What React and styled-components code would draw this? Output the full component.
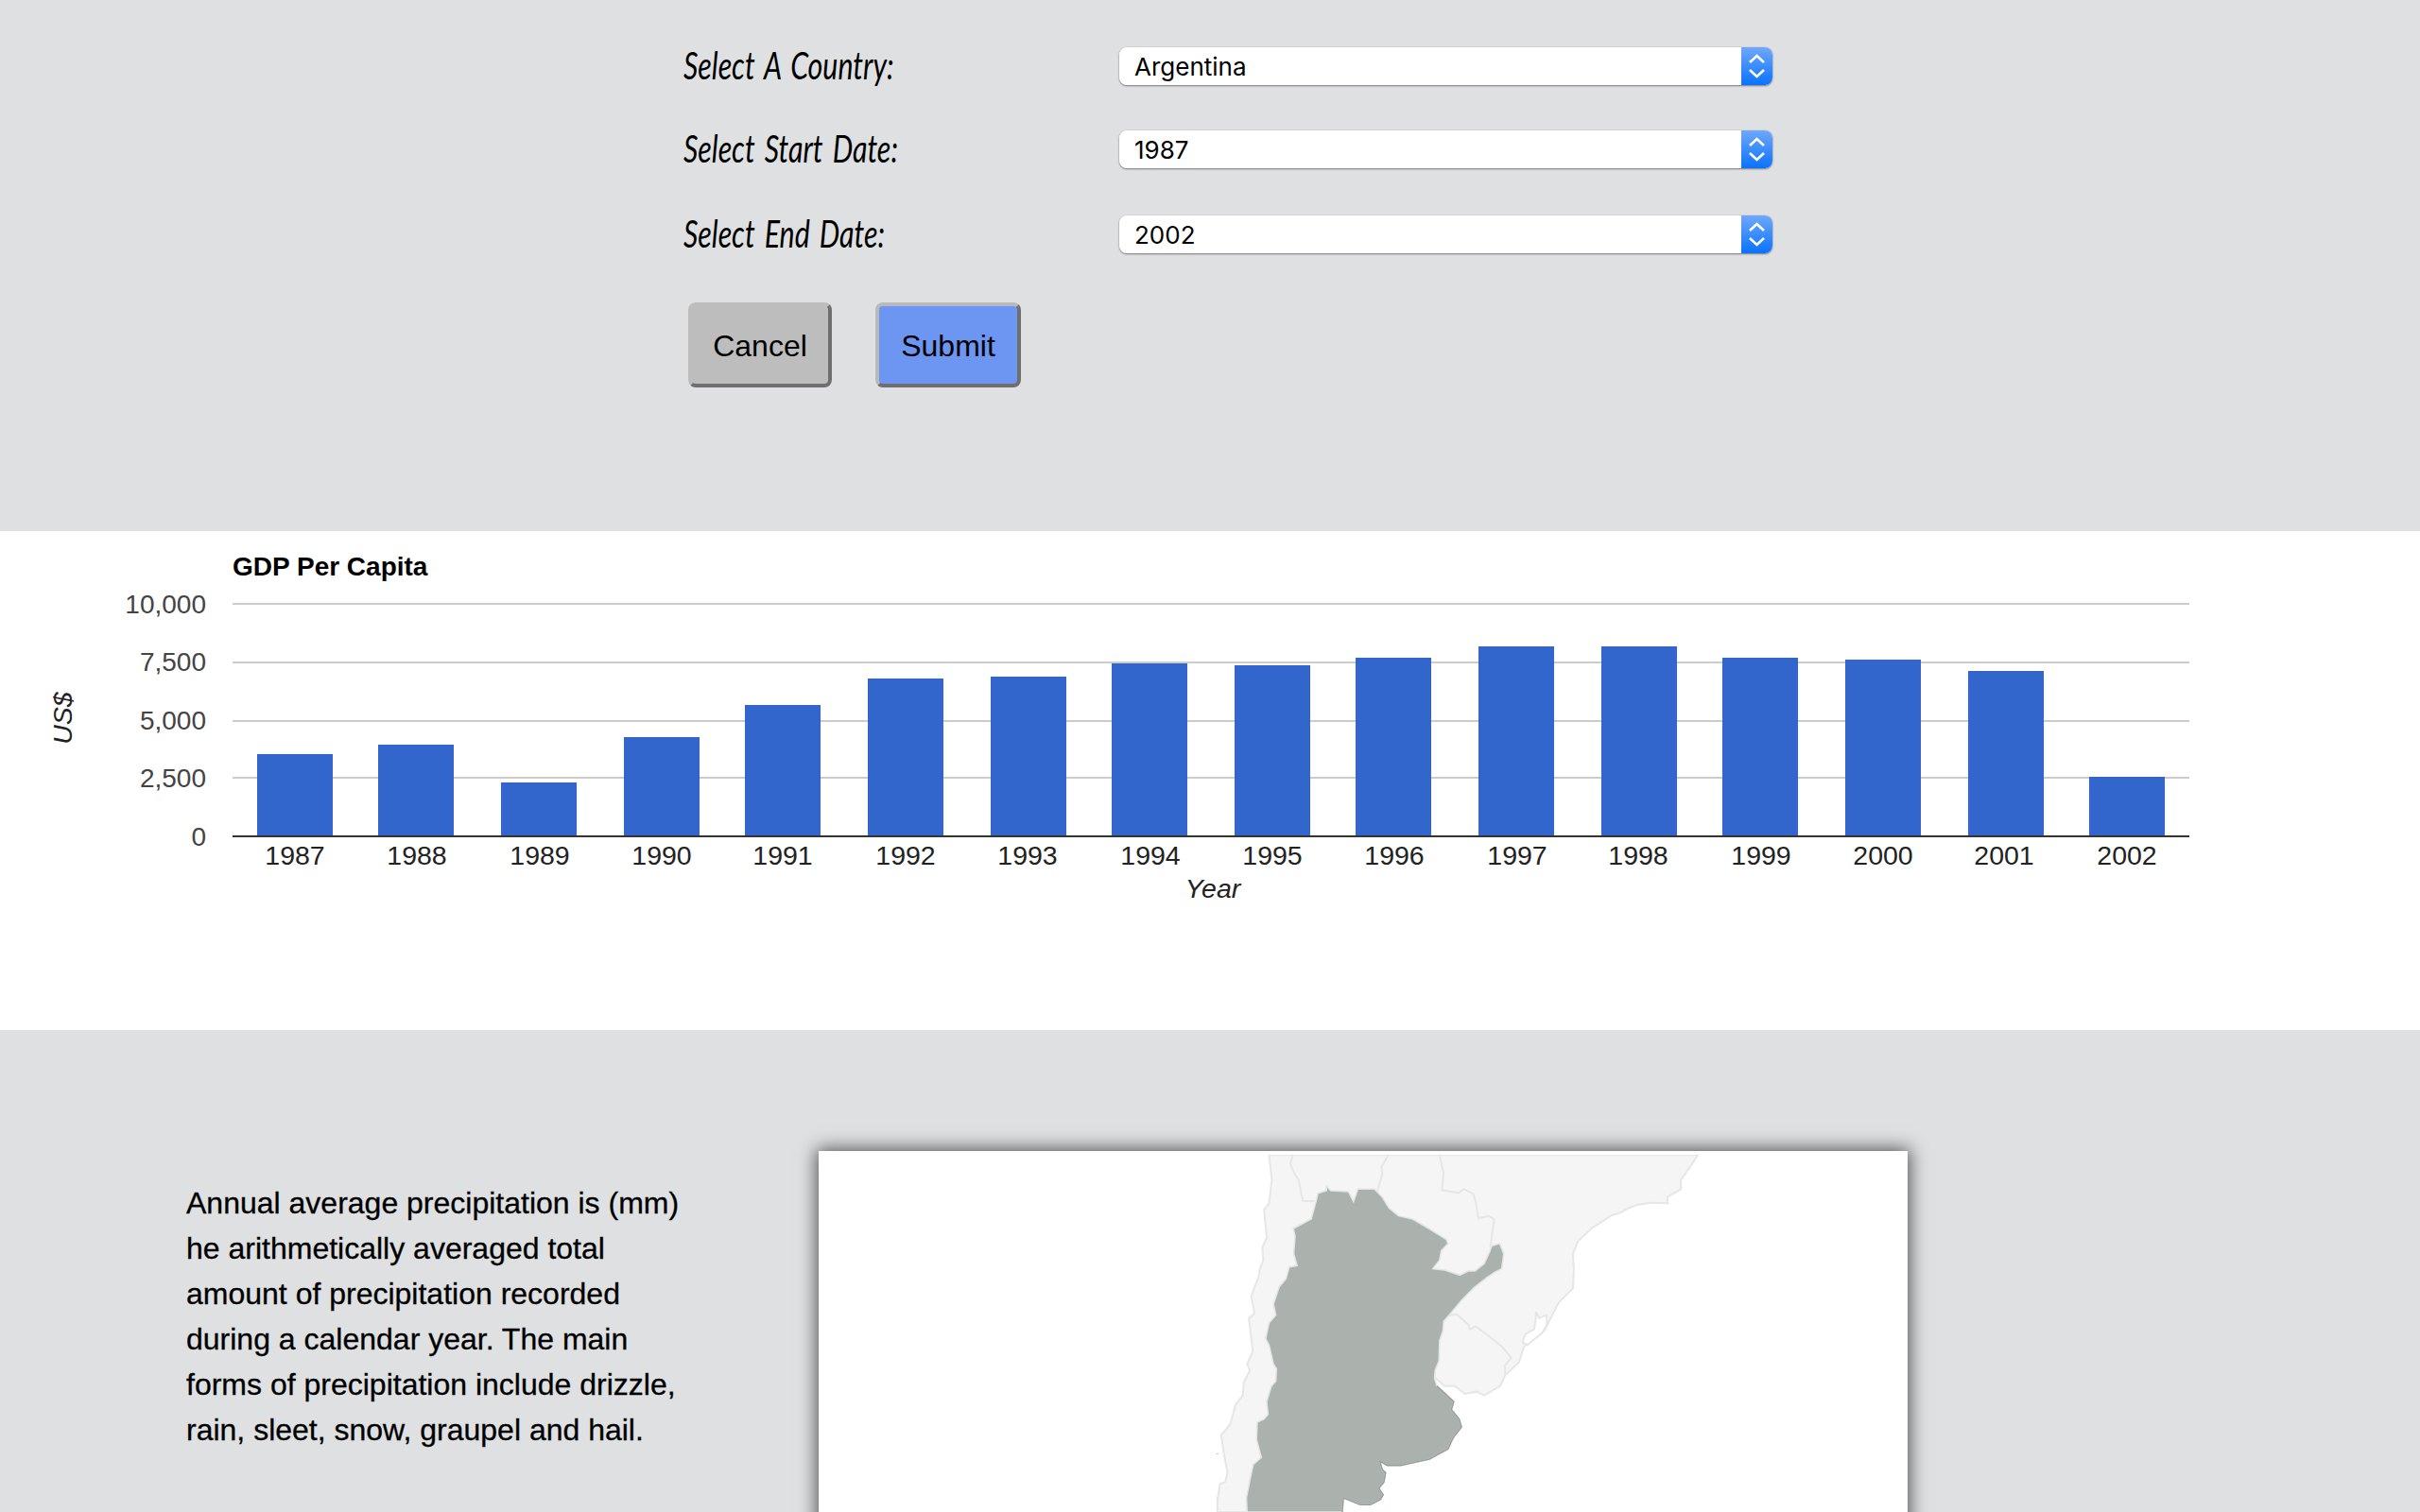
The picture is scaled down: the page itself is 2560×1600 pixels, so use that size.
import styled, { createGlobalStyle } from "styled-components";

const Reset = createGlobalStyle`
  html, body {
    margin: 0;
    height: 1600px;
    overflow: hidden;
    background: #dee0e2;
    font-family: "Liberation Sans", Arial, sans-serif;
  }
`;

const bars = [
  { year: 1987, x: 272, top: 798, label: 312 },
  { year: 1988, x: 400, top: 788, label: 441 },
  { year: 1989, x: 530, top: 828, label: 571 },
  { year: 1990, x: 660, top: 780, label: 700 },
  { year: 1991, x: 788, top: 746, label: 828 },
  { year: 1992, x: 918, top: 718, label: 958 },
  { year: 1993, x: 1048, top: 716, label: 1087 },
  { year: 1994, x: 1176, top: 702, label: 1217 },
  { year: 1995, x: 1306, top: 704, label: 1346 },
  { year: 1996, x: 1434, top: 696, label: 1475 },
  { year: 1997, x: 1564, top: 684, label: 1605 },
  { year: 1998, x: 1694, top: 684, label: 1733 },
  { year: 1999, x: 1822, top: 696, label: 1863 },
  { year: 2000, x: 1952, top: 698, label: 1992 },
  { year: 2001, x: 2082, top: 710, label: 2120 },
  { year: 2002, x: 2210, top: 822, label: 2250 },
];

const ticks = [
  { text: "10,000", line: 639, base: 649 },
  { text: "7,500", line: 701, base: 710 },
  { text: "5,000", line: 763, base: 772 },
  { text: "2,500", line: 823, base: 833 },
];

const selects = [
  { label: "Select A Country:", value: "Argentina", gap: 48 },
  { label: "Select Start Date:", value: "1987", gap: 50 },
  { label: "Select End Date:", value: "2002", gap: 52 },
];

const land =
  "175,36 183,115 175,190 160,210 168,300 155,330 158,370 147,400 145,420 122,485 132,540 115,555 127,660 110,700 118,720 100,760 97,800 75,830 68,860 60,890 42,915 33,925 42,990 52,1045 45,1075 30,1080 22,1130 22,1170 200,1170 668,745 695,770 725,770 755,795 790,788 812,800 860,770 875,735 915,695 930,645 990,595 1033,505 1075,460 1078,400 1075,350 1090,310 1130,270 1190,228 1215,220 1240,205 1265,195 1305,188 1355,190 1355,170 1395,145 1395,115 1425,70 1445,36";

const borders = [
  "245,36 238,65 250,95 262,115 275,183 310,183",
  "528,36 508,75 510,100 493,160",
  "680,36 692,95 687,148 735,157 752,145 780,160 787,185 795,238 825,230 842,240 830,330",
  "705,547 730,542 765,575 770,590 787,580 830,615 865,645 892,680 873,705 875,735",
];

const lagoon = "965,535 975,555 997,545 998,575 985,600 940,640 925,630 935,605 960,590 965,560";

const argentina =
  "345,135 358,150 410,153 425,185 438,145 487,145 510,170 530,205 558,230 600,240 640,265 700,305 705,318 685,340 680,370 660,398 695,402 740,418 765,405 785,405 812,382 828,345 835,325 858,318 870,350 864,398 845,408 822,424 782,458 745,498 708,545 692,565 690,595 680,625 678,690 667,720 665,745 672,770 722,820 715,845 738,875 745,900 720,935 705,970 650,1002 565,1022 525,1022 503,1008 510,1035 520,1045 515,1075 500,1095 513,1115 505,1130 475,1147 445,1147 395,1125 392,1170 110,1170 108,1125 120,1060 128,1020 152,997 138,940 140,885 160,875 172,860 168,820 182,770 195,755 197,715 188,700 175,640 165,620 175,570 195,545 188,510 205,455 225,430 235,392 258,388 248,350 252,295 247,270 300,240 315,180 320,158 345,150";

const coast =
  "672,770 722,820 715,845 738,875 745,900 720,935 705,970 650,1002 565,1022 525,1022 503,1008 510,1035 520,1045 515,1075 500,1095 513,1115 505,1130 475,1147 445,1147 395,1125 392,1170";

export default function App() {
  return (
    <Page>
      <Reset />
      <FormSection>
        {selects.map((row) => (
          <Row key={row.label} $gap={row.gap}>
            <LabelCell>
              <Label>{row.label}</Label>
            </LabelCell>
            <SelectBox>
              <NativeSelect defaultValue={row.value}>
                <option>{row.value}</option>
              </NativeSelect>
              <Stepper viewBox="0 0 33 40">
                <path d="M9 16 L16.5 9 L24 16 M9 24 L16.5 31 L24 24" />
              </Stepper>
            </SelectBox>
          </Row>
        ))}
        <Buttons>
          <Button $bg="#bdbdbd" $light="#bdbdbd" $width={152}>Cancel</Button>
          <Button $bg="#6d95f2" $light="#b9b9b9" $width={154}>Submit</Button>
        </Buttons>
      </FormSection>

      <ChartSection>
        <svg width="2560" height="528" viewBox="0 562 2560 528">
          <ChartTitle x="246" y="609">GDP Per Capita</ChartTitle>
          {ticks.map((t) => (
            <g key={t.text}>
              <rect x="246" y={t.line - 1} width="2070" height="2" fill="#cccccc" />
              <TickText x="218" y={t.base}>{t.text}</TickText>
            </g>
          ))}
          <TickText x="218" y="895">0</TickText>
          {bars.map((b) => (
            <g key={b.year}>
              <rect x={b.x} y={b.top} width="80" height={884 - b.top} fill="#3366cc" />
              <YearText x={b.label} y="915">{b.year}</YearText>
            </g>
          ))}
          <rect x="246" y="884" width="2070" height="2" fill="#333333" />
          <AxisName x="1283" y="950">Year</AxisName>
          <AxisName x="76" y="760" transform="rotate(-90 76 760)">US$</AxisName>
        </svg>
      </ChartSection>

      <MapSection>
        <Blurb>
          Annual average precipitation is (mm) he arithmetically averaged total amount of
          precipitation recorded during a calendar year. The main forms of precipitation
          include drizzle, rain, sleet, snow, graupel and hail.
        </Blurb>
        <MapCard>
          <svg width="1152" height="378" viewBox="-1159.2 36 3225.6 1134" preserveAspectRatio="none">
            <Land points={land} />
            {borders.map((b) => (
              <Border key={b} points={b} />
            ))}
            <Lagoon points={lagoon} />
            <Country points={argentina} />
            <Coast points={coast} />
            <ellipse cx="22" cy="985" rx="4" ry="2" fill="#c4c4c4" />
          </svg>
        </MapCard>
      </MapSection>
    </Page>
  );
}

const Page = styled.div`
  height: 1600px;
  overflow: hidden;
`;

const FormSection = styled.section`
  height: 562px;
  box-sizing: border-box;
  padding: 50px 0 0 723px;
  background: #dee0e2;
`;

const Row = styled.div`
  display: flex;
  align-items: center;
  height: 40px;
  margin-bottom: ${(p) => p.$gap}px;
`;

const LabelCell = styled.div`
  width: 461px;
  flex: none;
  margin-top: -4px;
`;

const Label = styled.label`
  display: inline-block;
  font-family: Lato, "Liberation Sans", sans-serif;
  font-style: italic;
  font-size: 41px;
  word-spacing: 4px;
  white-space: nowrap;
  color: #000;
  transform: scaleX(0.74);
  transform-origin: left center;
`;

const SelectBox = styled.div`
  position: relative;
  width: 691px;
  height: 40px;
  border-radius: 8px;
  overflow: hidden;
  box-shadow: 0 1px 2px rgba(0, 0, 0, 0.45), 0 0 1px rgba(0, 0, 0, 0.35);
`;

const NativeSelect = styled.select`
  appearance: none;
  display: block;
  width: 100%;
  height: 100%;
  border: 0;
  padding: 0 0 0 16px;
  background: #fff;
  font-family: Inter, sans-serif;
  font-size: 26px;
  color: #000;
`;

const Stepper = styled.svg`
  position: absolute;
  top: 0;
  right: 0;
  width: 33px;
  height: 40px;
  background: linear-gradient(#6fa8fb, #0a72ff);
  pointer-events: none;

  path {
    fill: none;
    stroke: #fff;
    stroke-width: 2.6;
  }
`;

const Buttons = styled.div`
  display: flex;
  gap: 46px;
  padding-left: 5px;
`;

const Button = styled.button`
  width: ${(p) => p.$width}px;
  height: 90px;
  box-sizing: border-box;
  padding: 2px 0 0;
  border-radius: 8px;
  border-style: solid;
  border-width: 4px;
  border-color: ${(p) => p.$light} #6f6f6f #6f6f6f ${(p) => p.$light};
  background: ${(p) => p.$bg};
  font-family: "Liberation Sans", sans-serif;
  font-size: 32px;
  color: #000;
`;

const ChartSection = styled.section`
  height: 528px;
  background: #fff;

  svg {
    display: block;
  }
`;

const ChartTitle = styled.text`
  font-family: "Liberation Sans", sans-serif;
  font-weight: 700;
  font-size: 28px;
  fill: #000;
`;

const TickText = styled.text`
  font-family: "Liberation Sans", sans-serif;
  font-size: 28px;
  text-anchor: end;
  fill: #444;
`;

const YearText = styled.text`
  font-family: "Liberation Sans", sans-serif;
  font-size: 28.5px;
  text-anchor: middle;
  fill: #222;
`;

const AxisName = styled.text`
  font-family: "Liberation Sans", sans-serif;
  font-style: italic;
  font-size: 28.5px;
  text-anchor: middle;
  fill: #222;
`;

const MapSection = styled.section`
  display: flex;
  align-items: flex-start;
  padding: 128px 0 0 197px;
  background: #dee0e2;
`;

const Blurb = styled.p`
  width: 530px;
  margin: 31px 139px 0 0;
  font-size: 32px;
  line-height: 48px;
  color: #000;
  -webkit-text-stroke: 0.3px #000;
`;

const MapCard = styled.div`
  width: 1152px;
  height: 600px;
  flex: none;
  box-sizing: border-box;
  padding-top: 4px;
  background: #fff;
  box-shadow: 0 0 18px 2px rgba(0, 0, 0, 0.65);

  svg {
    display: block;
  }
`;

const Land = styled.polygon`
  fill: #f5f5f5;
  stroke: #e6e6e6;
  stroke-width: 2;
  vector-effect: non-scaling-stroke;
`;

const Border = styled.polyline`
  fill: none;
  stroke: #e6e6e6;
  stroke-width: 2;
  vector-effect: non-scaling-stroke;
`;

const Lagoon = styled.polygon`
  fill: #fff;
  stroke: #e6e6e6;
  stroke-width: 2;
  vector-effect: non-scaling-stroke;
`;

const Country = styled.polygon`
  fill: #abb1ad;
  stroke: #e3e5e4;
  stroke-width: 1.5;
  vector-effect: non-scaling-stroke;
`;

const Coast = styled.polyline`
  fill: none;
  stroke: #989f9b;
  stroke-width: 1.5;
  vector-effect: non-scaling-stroke;
`;
